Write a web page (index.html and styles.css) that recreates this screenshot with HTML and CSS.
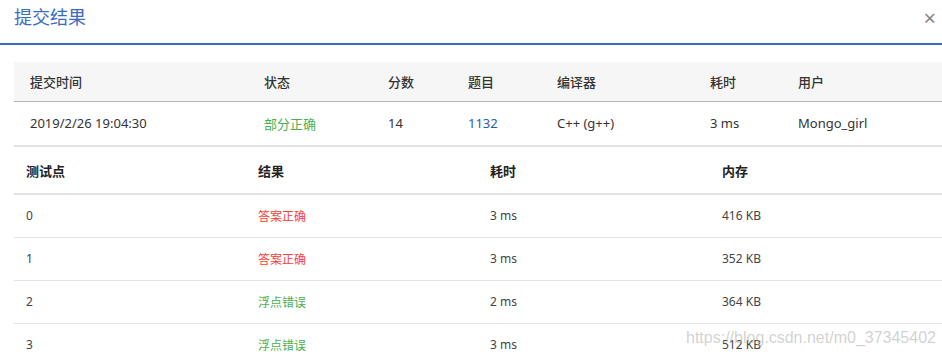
FILE: index.html
```html
<!DOCTYPE html>
<html lang="zh-CN">
<head>
	<meta charset="UTF-8">
	<title>提交结果</title>
	<link rel="stylesheet" href="styles.css">
</head>
<body>
	<div class="modal">
		<div class="modal-head">
			<h3 class="modal-title">提交结果</h3>
			<span class="close">&times;</span>
		</div>
		<div class="modal-body">
			<table class="info">
				<colgroup>
					<col style="width:234px"><col style="width:124px"><col style="width:80px"><col style="width:89px"><col style="width:153px"><col style="width:88px"><col>
				</colgroup>
				<thead>
					<tr>
						<th>提交时间</th><th>状态</th><th>分数</th><th>题目</th><th>编译器</th><th>耗时</th><th>用户</th>
					</tr>
				</thead>
				<tbody>
					<tr>
						<td>2019/2/26 19:04:30</td>
						<td class="ok">部分正确</td>
						<td>14</td>
						<td><a href="#">1132</a></td>
						<td>C++ (g++)</td>
						<td>3 ms</td>
						<td>Mongo_girl</td>
					</tr>
				</tbody>
			</table>
			<table class="cases">
				<thead>
					<tr><th>测试点</th><th>结果</th><th>耗时</th><th>内存</th></tr>
				</thead>
				<tbody>
					<tr><td>0</td><td class="ac">答案正确</td><td>3 ms</td><td>416 KB</td></tr>
					<tr><td>1</td><td class="ac">答案正确</td><td>3 ms</td><td>352 KB</td></tr>
					<tr><td>2</td><td class="ok">浮点错误</td><td>2 ms</td><td>364 KB</td></tr>
					<tr><td>3</td><td class="ok">浮点错误</td><td>3 ms</td><td>512 KB</td></tr>
				</tbody>
			</table>
			<span class="mark">https://blog.csdn.net/m0_37345402</span>
		</div>
	</div>
</body>
</html>
```

FILE: styles.css
```css
*{ margin:0; padding:0; box-sizing:border-box;}
body{ font-family:"Noto Sans","Noto Sans CJK SC",sans-serif; color:#333; background:#fff; overflow:hidden;}
.modal{ width:942px; height:358px; position:relative;}
.modal-head{ height:45px; border-bottom:2px solid #3b6cc4; display:flex; align-items:flex-start; justify-content:space-between; padding:4px 6px 0 14px;}
.modal-title{ font-family:"Noto Sans CJK SC",sans-serif; font-size:18px; font-weight:normal; color:#3b6cc4; line-height:24px;}
.close{ font-size:22px; line-height:22px; color:#888; margin-top:2px;}
.modal-body{ padding:17px 0 0 14px;}
table{ width:100%; border-collapse:collapse; table-layout:fixed;}
.info th{ background:#f6f6f6; height:39px; text-align:left; padding-left:16px; font-size:13px; font-weight:500; border-bottom:1px solid #b5b5b5;}
.info td{ height:45px; padding-left:16px; font-size:13px; border-bottom:2px solid #e3e3e7; color:#333;}
.info a{ color:#1f5ea8; text-decoration:none;}
.cases th{ height:47px; text-align:left; padding-left:12px; font-size:13px; font-weight:600; color:#222; border-bottom:2px solid #e3e3e7;}
.cases td{ height:43px; padding-left:12px; font-size:12px; border-bottom:1px solid #e3e3e7; color:#444;}
.ok{ color:#4caf50 !important;}
.ac{ color:#f4433a !important;}
.cases td.ok,.cases td.ac{ font-family:"Noto Sans CJK SC",sans-serif;}
.mark{ position:absolute; left:686px; top:329px; font-family:"Liberation Sans",sans-serif; font-size:16px; color:rgba(180,180,180,0.6);}
```
